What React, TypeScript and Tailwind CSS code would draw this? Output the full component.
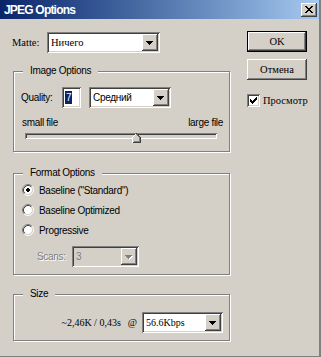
import React from "react";

const SANS = "[font-family:'Liberation_Sans',Arial,sans-serif] text-[10px] tracking-[-0.3px]";
const SERIF = "[font-family:'Liberation_Serif','Times_New_Roman',serif] text-[10.5px]";
const SERIF10 = "[font-family:'Liberation_Serif','Times_New_Roman',serif] text-[10px]";
const RAISED =
  "shadow-[inset_-1px_-1px_#404040,inset_1px_1px_#fff,inset_-2px_-2px_#808080,inset_2px_2px_#d4d0c8]";
const SUNKEN =
  "shadow-[inset_1px_1px_#808080,inset_-1px_-1px_#fff,inset_2px_2px_#404040,inset_-2px_-2px_#d4d0c8]";

function Arrow({ disabled }: { disabled?: boolean }) {
  return (
    <svg width="8" height="5" viewBox="0 0 8 5" shapeRendering="crispEdges">
      {disabled && (
        <path d="M1 1h7v1H1zM2 2h5v1H2zM3 3h3v1H3zM4 4h1v1H4z" fill="#fff" />
      )}
      <path
        d="M0 0h7v1H0zM1 1h5v1H1zM2 2h3v1H2zM3 3h1v1H3z"
        fill={disabled ? "#808080" : "#000"}
      />
    </svg>
  );
}

function Combo({
  className,
  text,
  font,
  disabled,
}: {
  className: string;
  text: string;
  font: string;
  disabled?: boolean;
}) {
  return (
    <div
      className={`flex h-[21px] items-center ${SUNKEN} ${
        disabled ? "bg-[#d4d0c8]" : "bg-white"
      } ${className}`}
    >
      <span
        className={`flex-1 pl-[4px] leading-[13px] ${font} ${
          disabled ? "text-[#808080]" : "text-black"
        }`}
      >
        {text}
      </span>
      <div
        className={`mr-[2px] flex h-[17px] w-[16px] items-center justify-center bg-[#d4d0c8] pt-[1px] ${RAISED}`}
      >
        <Arrow disabled={disabled} />
      </div>
    </div>
  );
}

function Group({
  title,
  className,
  children,
}: {
  title: string;
  className: string;
  children: React.ReactNode;
}) {
  return (
    <div
      className={`relative ml-[1px] w-[217px] border border-[#808080] shadow-[1px_1px_0_#fff,inset_1px_1px_0_#fff] ${className}`}
    >
      <span
        className={`absolute left-[9px] top-[-8px] bg-[#d4d0c8] px-[7px] leading-[13px] text-black ${SANS}`}
      >
        {title}
      </span>
      {children}
    </div>
  );
}

function Radio({ checked }: { checked?: boolean }) {
  return (
    <svg width="12" height="12" viewBox="0 0 12 12">
      <circle cx="6" cy="6" r="4.5" fill="#fff" />
      <path d="M2.11 9.89 A5.5 5.5 0 0 1 9.89 2.11" fill="none" stroke="#808080" />
      <path d="M9.89 2.11 A5.5 5.5 0 0 1 2.11 9.89" fill="none" stroke="#fff" />
      <path d="M2.82 9.18 A4.5 4.5 0 0 1 9.18 2.82" fill="none" stroke="#404040" />
      <path d="M9.18 2.82 A4.5 4.5 0 0 1 2.82 9.18" fill="none" stroke="#d4d0c8" />
      {checked && (
        <path
          d="M5 4h2v1h1v2h-1v1h-2v-1h-1v-2h1z"
          fill="#000"
          shapeRendering="crispEdges"
        />
      )}
    </svg>
  );
}

export default function App() {
  return (
    <div className="flex h-[357px] w-[321px] flex-col overflow-hidden border-b border-r-2 border-[#808080] bg-[#d4d0c8]">
      {/* Title bar */}
      <div className="flex h-[19px] items-center justify-between bg-linear-to-r from-[#0a246a] to-[#a6caf0] pl-[4px] pr-[2px]">
        <span className="text-[12px] font-bold leading-[14px] tracking-[-0.8px] text-white [font-family:'Liberation_Sans',Arial,sans-serif]">
          JPEG Options
        </span>
        <div
          className={`flex h-[14px] w-[16px] items-center justify-center bg-[#d4d0c8] pr-[1px] ${RAISED}`}
        >
          <svg width="8" height="7" viewBox="0 0 8 7" shapeRendering="crispEdges">
            <path
              d="M0 0h2v1H0zM6 0h2v1H6zM1 1h2v1H1zM5 1h2v1H5zM2 2h4v1H2zM3 3h2v1H3zM2 4h4v1H2zM1 5h2v1H1zM5 5h2v1H5zM0 6h2v1H0zM6 6h2v1H6z"
              fill="#000"
            />
          </svg>
        </div>
      </div>

      {/* Body */}
      <div className="flex flex-1 flex-row">
        {/* Left column */}
        <div className="flex flex-col pl-[12px] pt-[13px]">
          <div className="flex h-[21px] items-center">
            <span className={`w-[35px] leading-[13px] text-black ${SERIF}`}>Matte:</span>
            <Combo className="w-[113px]" text="Ничего" font={SERIF} />
          </div>

          <Group title="Image Options" className="mt-[18px] h-[81px]">
            <div className="ml-[7px] mt-[15px] flex h-[21px] items-center">
              <span className={`w-[41px] leading-[13px] text-black ${SANS}`}>Quality:</span>
              <div
                className={`flex h-[21px] w-[19px] items-center bg-white pl-[3px] ${SUNKEN}`}
              >
                <span className={`bg-[#0a246a] px-[1px] leading-[13px] text-white ${SANS}`}>
                  7
                </span>
              </div>
              <Combo className="ml-[8px] w-[82px]" text="Средний" font={SANS} />
            </div>
            <div
              className={`mt-[9px] flex h-[12px] justify-between pl-[8px] pr-[6px] leading-[12px] text-black ${SANS}`}
            >
              <span>small file</span>
              <span>large file</span>
            </div>
            <div className={`relative ml-[11px] mt-[4px] h-[6px] w-[192px] bg-[#d4d0c8] ${SUNKEN}`}>
              <svg
                className="absolute left-[107px] top-0"
                width="9"
                height="10"
                viewBox="0 0 9 10"
                shapeRendering="crispEdges"
              >
                <path d="M4 0 L8.5 4.5 V9.5 H0.5 V4.5 Z" fill="#d4d0c8" />
                <polyline points="0.5,9.5 0.5,4.5 4.5,0.5" fill="none" stroke="#fff" />
                <polyline points="4.5,0.5 8.5,4.5 8.5,9.5 0.5,9.5" fill="none" stroke="#404040" />
                <polyline points="4.5,1.5 7.5,4.5 7.5,8.5 1.5,8.5" fill="none" stroke="#808080" />
              </svg>
            </div>
          </Group>

          <Group title="Format Options" className="mt-[21px] h-[102px]">
            <div className={`flex flex-col pt-[6px] leading-[13px] text-black ${SANS}`}>
              <div className="flex h-[20px] items-center pl-[8px]">
                <Radio checked />
                <span className="ml-[5px]">Baseline ("Standard")</span>
              </div>
              <div className="flex h-[20px] items-center pl-[8px]">
                <Radio />
                <span className="ml-[5px]">Baseline Optimized</span>
              </div>
              <div className="flex h-[20px] items-center pl-[8px]">
                <Radio />
                <span className="ml-[5px]">Progressive</span>
              </div>
              <div className="mt-[6px] flex h-[21px] items-center pl-[23px]">
                <span className="w-[35px] text-[#808080] [text-shadow:1px_1px_0_#fff]">
                  Scans:
                </span>
                <Combo className="w-[67px]" text="3" font={SANS} disabled />
              </div>
            </div>
          </Group>

          <Group title="Size" className="mt-[19px] h-[47px]">
            <div className="mt-[17px] flex h-[21px] items-center justify-end pr-[6px]">
              <span className={`leading-[13px] text-black ${SERIF10}`}>~2,46K / 0,43s</span>
              <span className={`ml-[7px] leading-[13px] text-black ${SERIF10}`}>@</span>
              <Combo className="ml-[5px] w-[81px]" text="56.6Kbps" font={SERIF10} />
            </div>
          </Group>
        </div>

        {/* Right column */}
        <div className="ml-[17px] flex flex-col pt-[12px]">
          <div className="h-[21px] w-[60px] border border-black">
            <div
              className={`flex h-full w-full items-center justify-center bg-[#d4d0c8] leading-[13px] text-black ${SERIF} ${RAISED}`}
            >
              OK
            </div>
          </div>
          <div
            className={`mt-[7px] flex h-[21px] w-[60px] items-center justify-center bg-[#d4d0c8] leading-[13px] text-black ${SERIF} ${RAISED}`}
          >
            Отмена
          </div>
          <div className="mt-[14px] flex items-center">
            <div className={`h-[13px] w-[13px] bg-white ${SUNKEN}`}>
              <svg width="13" height="13" viewBox="0 0 13 13" shapeRendering="crispEdges">
                <path
                  d="M9 3h1v1H9zM8 4h2v1H8zM3 5h1v1H3zM7 5h3v1H7zM3 6h2v1H3zM6 6h3v1H6zM3 7h5v1H3zM4 8h3v1H4zM5 9h1v1H5z"
                  fill="#000"
                />
              </svg>
            </div>
            <span className={`ml-[3px] leading-[13px] text-black ${SERIF}`}>Просмотр</span>
          </div>
        </div>
      </div>
    </div>
  );
}
